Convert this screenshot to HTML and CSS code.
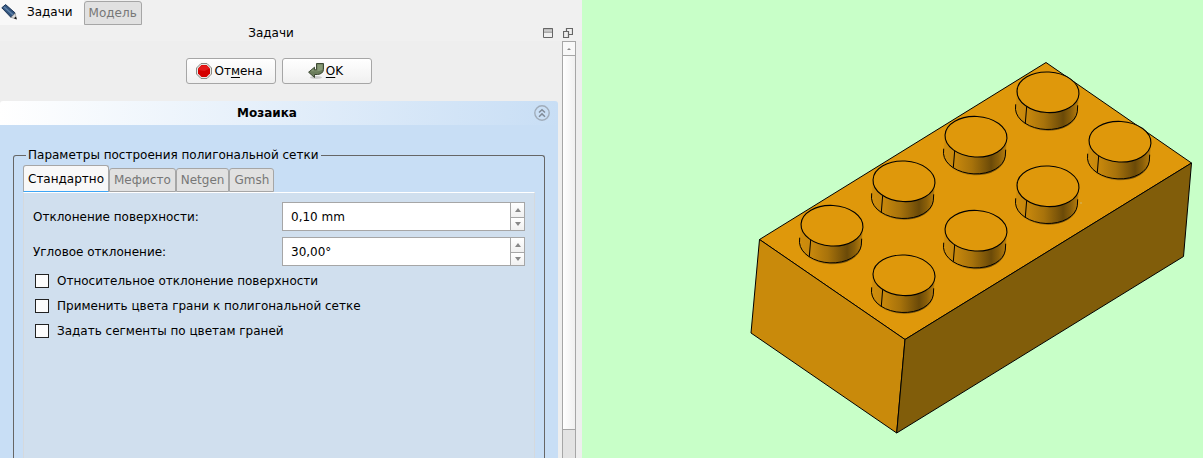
FILE: index.html
```html
<!DOCTYPE html>
<html lang="ru">
<head>
<meta charset="utf-8">
<title>Мозаика</title>
<link rel="stylesheet" href="styles.css">
</head>
<body>
<div class="app">
  <aside class="sidebar">
    <div class="dock-tabs" role="tablist">
      <button class="dock-tab dock-tab-active" role="tab" aria-selected="true">
        <svg class="pencil" viewBox="0 0 16 16" aria-hidden="true">
          <path d="M.8 3.800 4.600.6 14.200 9 10 13.400z" fill="#31557f" stroke="#1d3557"/>
          <path d="M3 2.800 12.200 11" stroke="#5f80a8" stroke-width="1.600"/>
          <path d="M10 13.400 14.200 9.400 15.400 15z" fill="#ddd" stroke="#888" stroke-width=".6"/>
          <path d="M12.800 14.200 15 12.600 15.800 15.600z" fill="#111"/>
        </svg>
        Задачи
      </button>
      <button class="dock-tab" role="tab" aria-selected="false">Модель</button>
    </div>
    <header class="dock-title">
      <span class="dock-name">Задачи</span>
      <button class="dock-button" aria-label="Свернуть">
        <svg viewBox="0 0 10 10" aria-hidden="true"><path d="M.5.5h9v9h-9zM0 1h10M1 4h8" fill="none" stroke="#666"/><path d="M1 1.500h8v2H1z" fill="#ccc"/></svg>
      </button>
      <button class="dock-button" aria-label="Открепить">
        <svg viewBox="0 0 10 10" aria-hidden="true"><path d="M3.500.5h6v6h-6z" fill="none" stroke="#666" stroke-width="1.200"/><path d="M.5 3.500h5v6h-5z" fill="#eee" stroke="#666" stroke-width="1.200"/></svg>
      </button>
    </header>
    <div class="scroll-area">
      <main class="tasks">
        <div class="actions">
          <button class="action">
            <svg viewBox="0 0 16 16" aria-hidden="true"><path d="M5 .5h6L15.500 5v6L11 15.500H5L.5 11V5z" fill="#e8e8e6" stroke="#888a85"/><path d="M5.500 2h5L14 5.500v5L10.500 14h-5L2 10.500v-5z" fill="#d40000"/><path d="M5.500 2.500h5l3 3-5 2.500-6-1V5.500z" fill="#e41a1a"/></svg>
            <span>От<u>м</u>ена</span>
          </button>
          <button class="action">
            <svg viewBox="0 0 16 16" aria-hidden="true"><ellipse cx="8" cy="14.500" rx="6" ry="1.500" fill="#ccc"/><path d="M8.500.5h7V6.500Q15 11 9.500 11.500H6.500v3L.6 9.200 6.500 4.200v2.600h2z" fill="#6b7d5b" stroke="#3d4934"/><path d="M9.500 1.500h5V6q-1 2-5 2.300H2.800L5.500 6v1.800h4z" fill="#879a76"/></svg>
            <span><u>O</u>K</span>
          </button>
        </div>
        <section class="task-box">
          <header class="task-header">
            <h1>Мозаика</h1>
            <button class="collapse" aria-label="Свернуть раздел">
              <svg viewBox="0 0 16 16" aria-hidden="true"><circle cx="8" cy="8" r="7.200" fill="none" stroke="#a0acba" stroke-width="1.400"/><path d="M5 7.500 8 4.700l3 2.800M5 11.700 8 8.900l3 2.800" fill="none" stroke="#808b98" stroke-width="1.500"/></svg>
            </button>
          </header>
          <div class="task-body">
            <fieldset class="group">
              <legend>Параметры построения полигональной сетки</legend>
              <div class="tabs" role="tablist">
                <button class="tab tab-active" role="tab" aria-selected="true">Стандартно</button>
                <button class="tab" role="tab" aria-selected="false">Мефисто</button>
                <button class="tab" role="tab" aria-selected="false">Netgen</button>
                <button class="tab" role="tab" aria-selected="false">Gmsh</button>
              </div>
              <div class="pane" role="tabpanel">
                <div class="field">
                  <label for="surface">Отклонение поверхности:</label>
                  <div class="spin">
                    <input id="surface" type="text" value="0,10 mm">
                    <div class="steps">
                      <button aria-label="Увеличить"><i class="up"></i></button>
                      <button aria-label="Уменьшить"><i class="down"></i></button>
                    </div>
                  </div>
                </div>
                <div class="field">
                  <label for="angle">Угловое отклонение:</label>
                  <div class="spin">
                    <input id="angle" type="text" value="30,00°">
                    <div class="steps">
                      <button aria-label="Увеличить"><i class="up"></i></button>
                      <button aria-label="Уменьшить"><i class="down"></i></button>
                    </div>
                  </div>
                </div>
                <div class="checks">
                  <label class="check"><input type="checkbox">Относительное отклонение поверхности</label>
                  <label class="check"><input type="checkbox">Применить цвета грани к полигональной сетке</label>
                  <label class="check"><input type="checkbox">Задать сегменты по цветам граней</label>
                </div>
              </div>
            </fieldset>
          </div>
        </section>
      </main>
      <div class="scrollbar">
        <button class="scroll-up" aria-label="Прокрутить вверх"><i class="up"></i></button>
        <div class="thumb"></div>
        <div class="track"></div>
      </div>
    </div>
  </aside>
  <div class="viewer">
    <svg class="model" viewBox="582 0 621 458" role="img" aria-label="Модель кирпичика">
      <defs>
        <linearGradient id="side" x1="-32" x2="30" y1="0" y2="0" gradientUnits="userSpaceOnUse">
          <stop offset="0" stop-color="#d08e0c"/>
          <stop offset=".2" stop-color="#c5860c"/>
          <stop offset=".45" stop-color="#a8730b"/>
          <stop offset=".76" stop-color="#6b4a08"/>
          <stop offset=".88" stop-color="#8a5f09"/>
          <stop offset="1" stop-color="#b87d0c"/>
        </linearGradient>
        <g id="stud">
          <path d="M-31-1-32.500 17A31 20.300 3 0 0 29.500 19.500L31 1z" fill="url(#side)"/>
          <path d="M-32.300 12-32.500 17A31 20.300 3 0 0 29.300 19.500L29.700 13M-21.300 14-22.700 31" fill="none" stroke="#000"/>
          <ellipse rx="31" ry="20.300" transform="rotate(3)" fill="#df980b" stroke="#000" stroke-width="1.100"/>
        </g>
      </defs>
      <g stroke="#000" stroke-linejoin="round">
        <path d="M1046 62.500 1191.500 163 905 339.500 759.500 239.500z" fill="#df980b"/>
        <path d="M759.500 239.500 905 339.500 896.700 433 751 333z" fill="#c98a0b"/>
        <path d="M905 339.500 1191.500 163 1183.500 256.500 896.700 433z" fill="#815d0a"/>
      </g>
      <use href="#stud" x="1048" y="92.300"/>
      <use href="#stud" x="976" y="136.700"/>
      <use href="#stud" x="904" y="181.300"/>
      <use href="#stud" x="832" y="225.700"/>
      <use href="#stud" x="1120" y="141.700"/>
      <use href="#stud" x="1048" y="186.300"/>
      <use href="#stud" x="976" y="230.700"/>
      <use href="#stud" x="904" y="275.300"/>
      <path d="M1080 202h2v2h-2z" fill="#d8a83a"/>
    </svg>
  </div>
</div>
</body>
</html>
```

FILE: styles.css
```css
* {
  box-sizing: border-box;
}

body {
  margin: 0;
  background: #eee;
  color: #000;
  font: 12px/16px "DejaVu Sans", sans-serif;
}

button,
input {
  margin: 0;
  padding: 0;
  color: inherit;
  font: inherit;
}

button {
  border: 0;
  background: none;
}

svg {
  display: block;
  flex: none;
}

.app {
  display: grid;
  grid-template-columns: minmax(0, 582fr) minmax(0, 621fr);
  height: 100vh;
  overflow: hidden;
}

.sidebar {
  display: flex;
  flex-direction: column;
  min-height: 0;
  background: #eee;
}

.dock-tabs {
  display: flex;
  align-items: flex-end;
  height: 25px;
  background: #f0f0f0;
}

.dock-tab {
  height: 24px;
  padding: 0 4px;
  border: 1px solid #a6a6a6;
  border-radius: 3px 3px 0 0;
  background: #e1e1e1;
  color: #777;
}

.dock-tab-active {
  display: flex;
  align-items: center;
  gap: 10px;
  height: 25px;
  padding: 0 11px 1px 1px;
  border: 0;
  border-radius: 0;
  background: #f8f8f8;
  color: #000;
}

.pencil {
  width: 16px;
  height: 16px;
}

.dock-title {
  display: flex;
  align-items: center;
  gap: 10px;
  height: 16px;
  padding-right: 9px;
  background: #f0f0f0;
}

.dock-name {
  flex: 1;
  padding-left: 9px;
  text-align: center;
}

.dock-button svg {
  width: 10px;
  height: 10px;
}

.scroll-area {
  display: flex;
  flex: 1;
  gap: 4px;
  min-height: 0;
  padding-right: 6px;
}

.tasks {
  display: flex;
  flex: 1;
  flex-direction: column;
  min-width: 0;
  overflow: hidden;
}

.actions {
  display: flex;
  flex: none;
  justify-content: center;
  gap: 6px;
  padding: 17px 0;
}

.action {
  display: flex;
  align-items: center;
  justify-content: center;
  gap: 2px;
  width: 90px;
  height: 26px;
  padding-right: 3px;
  border: 1px solid #a6a6a6;
  border-radius: 3px;
  background: linear-gradient(#fff, #f0f0f0);
}

.action svg {
  width: 16px;
  height: 16px;
}

.action u {
  text-underline-offset: 2px;
}

.task-box {
  display: flex;
  flex: 1;
  flex-direction: column;
}

.task-header {
  display: flex;
  align-items: center;
  height: 24px;
  padding-right: 8px;
  border-radius: 3px 3px 0 0;
  background: linear-gradient(90deg, #fff, #c8def5);
}

.task-header h1 {
  flex: 1;
  margin: 0;
  font-size: 12px;
  text-align: center;
}

.collapse svg {
  width: 16px;
  height: 16px;
}

.task-body {
  display: flex;
  flex: 1;
  padding: 22px 13px 0;
  background: #c8def5;
}

.group {
  display: flex;
  flex: 1;
  flex-direction: column;
  min-width: 0;
  margin: 0;
  padding: 2px 9px 0;
  border: 1px solid #666;
  border-bottom: 0;
  border-radius: 3px 3px 0 0;
}

.group legend {
  margin-left: 3px;
  padding: 0 2px;
}

.tabs {
  display: flex;
  align-items: flex-end;
}

.tab {
  height: 24px;
  padding: 0 4px;
  border: 1px solid #a6a6a6;
  border-radius: 3px 3px 0 0;
  background: #e1e1e1;
  color: #777;
}

.tab-active {
  height: 27px;
  border-bottom-color: #3da5f5;
  background: #f8f8f8;
  color: #000;
}

.pane {
  display: flex;
  flex: 1;
  flex-direction: column;
  gap: 6px;
  padding: 9px 9px 0;
  border: 1px solid #d5d9dd;
  border-top-color: #fff;
  border-bottom: 0;
  background: #d0dfee;
}

.field {
  display: grid;
  grid-template-columns: 1fr 1fr;
  align-items: center;
  gap: 6px;
}

.spin {
  display: flex;
  height: 29px;
  border: 1px solid #a6a6a6;
  background: #fff;
}

.spin input {
  flex: 1;
  min-width: 0;
  padding-left: 8px;
  border: 0;
  background: transparent;
  outline: 0;
}

.steps {
  display: grid;
  grid-template-rows: 1fr 1fr;
  width: 14px;
  border-left: 1px solid #a6a6a6;
}

.steps button {
  display: grid;
  place-items: center;
  background: linear-gradient(#fff, #f0f0f0);
}

.steps button + button {
  border-top: 1px solid #a6a6a6;
}

.up,
.down {
  width: 0;
  border: 3px solid transparent;
}

.up {
  border-top: 0;
  border-bottom: 4px solid #888;
}

.down {
  border-top: 4px solid #888;
  border-bottom: 0;
}

.checks {
  display: grid;
  gap: 9px;
  padding: 1px 2px;
}

.check {
  display: flex;
  align-items: center;
  gap: 8px;
}

.check input {
  width: 14px;
  height: 14px;
  border: 1px solid #222;
  background: #fcfcfc;
  appearance: none;
}

.scrollbar {
  display: flex;
  flex-direction: column;
  width: 14px;
  border: 1px solid #a6a6a6;
  border-bottom: 0;
}

.scroll-up {
  display: grid;
  place-items: center;
  height: 14px;
  border-bottom: 1px solid #a6a6a6;
  background: #f8f8f8;
}

.scroll-up .up {
  border-width: 0 2px 2px;
}

.thumb {
  flex: 374;
  border-bottom: 1px solid #a6a6a6;
  background: linear-gradient(90deg, #fff, #f0f0f0);
}

.track {
  flex: 28;
  background: #e3e3e3;
}

.viewer {
  min-width: 0;
  min-height: 0;
  background: #c8ffc8;
}

.model {
  width: 100%;
  height: 100%;
}
```
